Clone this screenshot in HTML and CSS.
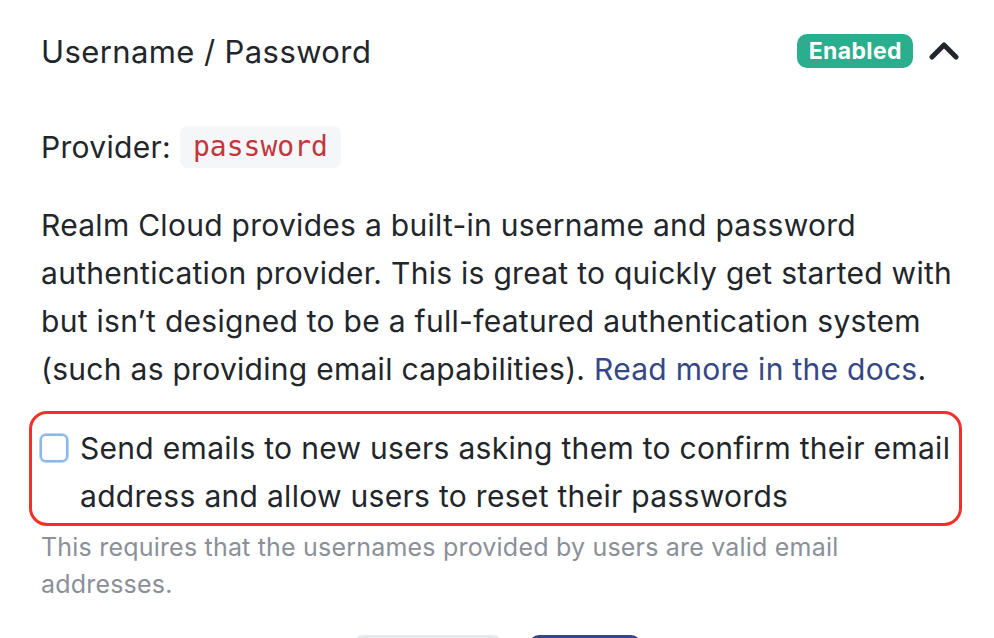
FILE: index.html
```html
<!DOCTYPE html>
<html lang="en">
<head>
<meta charset="utf-8">
<link rel="stylesheet" href="styles.css">
</head>
<body>
<section class="panel">
  <header class="panel-header">
    <h2 class="panel-title">Username / Password</h2>
    <div class="panel-status">
      <span class="badge">Enabled</span>
      <svg class="chevron" width="30" height="20" viewBox="0 0 30 20" aria-hidden="true">
        <path d="M3 16 L15 4 L27 16" fill="none" stroke="#22262b" stroke-width="5" stroke-linecap="round" stroke-linejoin="round"/>
      </svg>
    </div>
  </header>
  <p class="provider">Provider: <code class="code">password</code></p>
  <p class="desc">Realm Cloud provides a built-in username and password authentication provider. This is great to quickly get started with but isn’t designed to be a full-featured authentication system (such as providing email capabilities). <a class="link" href="#">Read more in the docs</a>.</p>
  <div class="highlight">
    <label class="check">
      <span class="box"></span>
      <span class="check-text">Send emails to new users asking them to confirm their email address and allow users to reset their passwords</span>
    </label>
  </div>
  <p class="hint">This requires that the usernames provided by users are valid email addresses.</p>
  <div class="actions">
    <button class="btn btn-secondary">Cancel</button>
    <button class="btn btn-primary">Save</button>
  </div>
</section>
</body>
</html>
```
FILE: styles.css
```css
html, body {
  margin: 0;
  padding: 0;
  background: #ffffff;
  overflow: hidden;
}
body {
  font-family: Inter, "Noto Sans", sans-serif;
  color: #22262b;
}
.panel {
  padding: 0 41px;
}
.panel-header {
  display: flex;
  align-items: center;
  justify-content: space-between;
  height: 54px;
  margin-top: 24px;
}
.panel-title {
  margin: 0;
  font-size: 31px;
  font-weight: 400;
  letter-spacing: 0.4px;
}
.panel-status {
  display: flex;
  align-items: center;
  gap: 16px;
  margin-right: -6px;
}
.badge {
  display: inline-flex;
  align-items: center;
  height: 34px;
  padding: 0 11px 0 12px;
  border-radius: 10px;
  background: #2bae8e;
  color: #ffffff;
  font-size: 23px;
  font-weight: 700;
  letter-spacing: 0.4px;
}
.chevron {
  display: block;
}
.provider {
  margin: 48px 0 0;
  font-size: 30px;
  letter-spacing: 0.3px;
  line-height: 42px;
  display: flex;
  align-items: center;
  gap: 9px;
}
.code {
  display: inline-block;
  font-family: "DejaVu Sans Mono", monospace;
  font-size: 28px;
  letter-spacing: 0;
  line-height: 42px;
  padding: 0 13px;
  background: #f5f6f8;
  border-radius: 8px;
  color: #c2363e;
}
.desc {
  margin: 33px -10px 0 0;
  font-size: 30px;
  letter-spacing: 0.28px;
  line-height: 48px;
}
.link {
  color: #364785;
  text-decoration: none;
}
.highlight {
  margin: 18px -9px 0 -12px;
  padding: 10px 0 3px 0;
  border: 3px solid #f0302a;
  border-radius: 18px;
}
.check {
  display: flex;
  align-items: flex-start;
  gap: 12px;
  font-size: 30px;
  letter-spacing: 0.3px;
  line-height: 48px;
}
.box {
  flex: none;
  width: 24px;
  height: 24px;
  margin: 10px 0 0 8px;
  border: 2px solid #8ab6ee;
  border-radius: 6px;
  box-shadow: 0 0 0 1px #bcd6f6;
  background: #fff;
}
.hint {
  margin: 3px 0 0;
  font-size: 25px;
  letter-spacing: 0.2px;
  line-height: 37px;
  color: #8a9098;
}
.actions {
  display: flex;
  justify-content: center;
  gap: 26px;
  margin-top: 32px;
}
.btn {
  height: 48px;
  border-radius: 10px;
  border: none;
  font-size: 24px;
  font-family: inherit;
}
.btn-secondary {
  width: 150px;
  background: #e6e8ec;
  color: #22262b;
}
.btn-primary {
  width: 112px;
  background: #364785;
  color: #fff;
}
```
